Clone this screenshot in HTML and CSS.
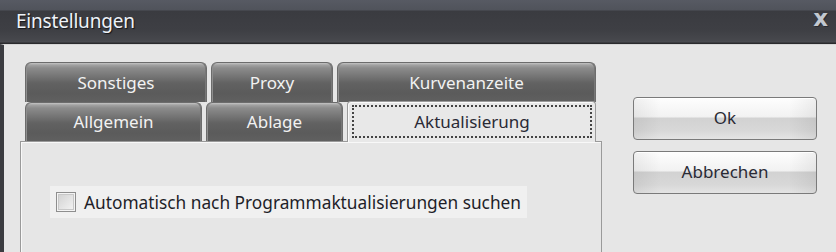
FILE: index.html
```html
<!DOCTYPE html>
<html lang="de">
<head>
<meta charset="utf-8">
<title>Einstellungen</title>
<link rel="stylesheet" href="styles.css">
</head>
<body>
<div class="window">
  <div class="titlebar">
    <span class="title">Einstellungen</span>
    <span class="close">x</span>
  </div>
  <div class="content">
    <div class="tabs-area">
      <div class="tabrow row1">
        <div class="tab w1">Sonstiges</div>
        <div class="tab w2">Proxy</div>
        <div class="tab w3">Kurvenanzeite</div>
      </div>
      <div class="tabrow row2">
        <div class="tab w4">Allgemein</div>
        <div class="tab w5">Ablage</div>
        <div class="tab selected w6"><span class="focus">Aktualisierung</span></div>
      </div>
      <div class="panel">
        <label class="checkrow">
          <span class="checkbox"></span>
          <span class="label">Automatisch nach Programmaktualisierungen suchen</span>
        </label>
      </div>
    </div>
    <div class="side">
      <div class="button">Ok</div>
      <div class="button">Abbrechen</div>
    </div>
  </div>
</div>
</body>
</html>
```
FILE: styles.css
```css
* { box-sizing: border-box; }
html, body {
  margin: 0;
  padding: 0;
  width: 836px;
  height: 252px;
  overflow: hidden;
  background: #e6e6e6;
  font-family: "Noto Sans", "DejaVu Sans", sans-serif;
}
.window {
  width: 836px;
  height: 252px;
  display: flex;
  flex-direction: column;
}
.titlebar {
  height: 44px;
  flex: none;
  display: flex;
  align-items: center;
  justify-content: space-between;
  padding: 0 8px 0 16px;
  background: linear-gradient(#575a63 0, #50535b 10px, #3a3b40 11px, #3e3f44 30px, #47484d 41px, #4c4d52 42px, #2a2a2d 43px, #2a2a2d 44px);
}
.title {
  color: #eef2f8;
  font-size: 19px;
  letter-spacing: -0.2px;
  text-shadow: 1px 1px 1px #15161a;
  margin-top: -3px;
}
.close {
  color: #c2c8d0;
  font-family: "DejaVu Sans", sans-serif;
  font-weight: bold;
  font-size: 23px;
  margin-top: -8px;
  text-shadow: 1px 1px 0 #2a2b2f;
}
.content {
  flex: 1;
  display: flex;
  border-left: 4px solid #3b3c41;
  padding-left: 16px;
  background: #e6e6e6;
  border-top: 1px solid #d6d6d6;
}
.tabs-area {
  width: 582px;
  padding-top: 17px;
  display: flex;
  flex-direction: column;
}
.tabrow {
  display: flex;
  gap: 4px;
  padding-left: 5px;
}
.row1 { height: 40px; }
.row2 { height: 39px; align-items: flex-end; }
.tab {
  height: 100%;
  display: flex;
  align-items: center;
  justify-content: center;
  color: #f2f2f2;
  font-size: 17px;
  border: 1px solid #6c6c6c;
  border-bottom: none;
  border-radius: 6px 6px 0 0;
  background: linear-gradient(#c4c4c4 0, #a2a2a2 2px, #8c8c8c 5px, #737373 14px, #626262 20px, #5b5b5b 30px, #606060 100%);
  box-shadow: inset 1px 0 0 #8e8e8e, inset -1px 0 0 #777;
  padding-bottom: 1px;
}
.w1 { width: 182px; }
.w2 { width: 122px; }
.w3 { width: 259px; }
.w4 { width: 177px; }
.w5 { width: 137px; }
.w6 { width: 249px; }
.tab.selected {
  height: 41px;
  margin-bottom: -1px;
  position: relative;
  z-index: 1;
  background: #e8e8e8;
  color: #2a2a35;
  border: 1px solid #9a9a9a;
  border-bottom: none;
  border-radius: 4px 4px 0 0;
  box-shadow: inset 1px 1px 0 #fafafa;
  padding: 3px 3px 4px 4px;
}
.focus {
  width: 100%;
  height: 100%;
  display: flex;
  align-items: center;
  justify-content: center;
  border: 2px dotted #444;
  padding-bottom: 1px;
}
.panel {
  flex: 1;
  border: 1px solid #9a9a9a;
  border-bottom: none;
  box-shadow: inset 1px 1px 0 #f8f8f8;
  background: #e6e6e6;
  padding: 44px 0 0 29px;
}
.checkrow {
  display: flex;
  align-items: center;
  width: 477px;
  height: 32px;
  background: #f0f0f0;
  padding-left: 6px;
  gap: 8px;
}
.checkbox {
  width: 20px;
  height: 20px;
  flex: none;
  border: 1px solid #8e8e8e;
  box-shadow: inset 0 0 0 1px #f4f4f4, inset 0 0 0 2px #c8c8c8;
  background: linear-gradient(135deg, #cfcfcf, #f6f6f6);
}
.label {
  font-size: 17.3px;
  color: #1e1e28;
  letter-spacing: 0;
}
.side {
  margin-left: 31px;
  padding-top: 52px;
  display: flex;
  flex-direction: column;
  gap: 11px;
}
.button {
  width: 184px;
  height: 43px;
  display: flex;
  align-items: center;
  justify-content: center;
  font-size: 17px;
  color: #2a2a35;
  border: 1px solid #7a7a7a;
  border-radius: 4px;
  background:
    linear-gradient(90deg, rgba(0,0,0,0.06), rgba(0,0,0,0) 15%, rgba(0,0,0,0) 85%, rgba(0,0,0,0.06)),
    linear-gradient(#fefefe 0, #f2f2f2 45%, #d2d2d2 50%, #d8d8d8 80%, #e4e4e4 100%);
  box-shadow: inset 0 1px 0 #fff;
  padding-bottom: 2px;
}
```
